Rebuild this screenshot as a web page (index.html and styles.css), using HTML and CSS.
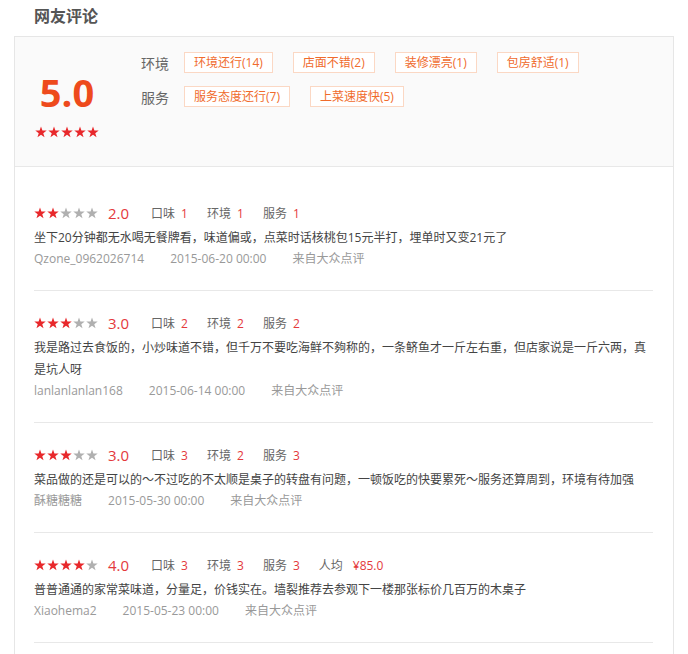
FILE: index.html
```html
<!DOCTYPE html>
<html lang="zh-CN">
<head>
  <meta charset="UTF-8">
  <title>网友评论</title>
  <link rel="stylesheet" href="styles.css">
</head>
<body>

  <svg width="0" height="0" class="defs">
    <symbol id="star" viewBox="0 0 12 12">
      <polygon points="6,0.4 7.41,4.46 11.71,4.55 8.28,7.14 9.53,11.25 6,8.8 2.47,11.25 3.72,7.14 0.29,4.55 4.59,4.46"/>
    </symbol>
  </svg>

  <div class="wrap">
    <h2 class="title">网友评论</h2>

    <div class="comment-box">
      <div class="summary">
        <div class="score">
          <div class="score-num">5.0</div>
          <div class="stars">
            <svg class="star on"><use href="#star"/></svg><svg class="star on"><use href="#star"/></svg><svg class="star on"><use href="#star"/></svg><svg class="star on"><use href="#star"/></svg><svg class="star on"><use href="#star"/></svg>
          </div>
        </div>
        <div class="tags">
          <div class="tag-row">
            <span class="tag-label">环境</span>
            <span class="tag">环境还行(14)</span>
            <span class="tag">店面不错(2)</span>
            <span class="tag">装修漂亮(1)</span>
            <span class="tag">包房舒适(1)</span>
          </div>
          <div class="tag-row">
            <span class="tag-label">服务</span>
            <span class="tag">服务态度还行(7)</span>
            <span class="tag">上菜速度快(5)</span>
          </div>
        </div>
      </div>

      <ul class="review-list" id="reviews"></ul>
    </div>
  </div>

  <script>
    const reviews = [
      {
        rate: 2,
        marks: [["口味", "1"], ["环境", "1"], ["服务", "1"]],
        text: "坐下20分钟都无水喝无餐牌看，味道偏或，点菜时话核桃包15元半打，埋单时又变21元了",
        user: "Qzone_0962026714",
        time: "2015-06-20 00:00"
      },
      {
        rate: 3,
        marks: [["口味", "2"], ["环境", "2"], ["服务", "2"]],
        text: "我是路过去食饭的，小炒味道不错，但千万不要吃海鲜不夠称的，一条鲚鱼才一斤左右重，但店家说是一斤六两，真是坑人呀",
        user: "lanlanlanlan168",
        time: "2015-06-14 00:00"
      },
      {
        rate: 3,
        marks: [["口味", "3"], ["环境", "2"], ["服务", "3"]],
        text: "菜品做的还是可以的～不过吃的不太顺是桌子的转盘有问题，一顿饭吃的快要累死～服务还算周到，环境有待加强",
        user: "酥糖糖糖",
        time: "2015-05-30 00:00"
      },
      {
        rate: 4,
        marks: [["口味", "3"], ["环境", "3"], ["服务", "3"]],
        price: "¥85.0",
        text: "普普通通的家常菜味道，分量足，价钱实在。墙裂推荐去参观下一楼那张标价几百万的木桌子",
        user: "Xiaohema2",
        time: "2015-05-23 00:00"
      }
    ];

    function starsHtml(n) {
      let html = "";
      for (let i = 0; i < 5; i++) {
        html += '<svg class="star ' + (i < n ? 'on' : 'off') + '"><use href="#star"/></svg>';
      }
      return html;
    }

    const list = document.getElementById("reviews");
    reviews.forEach(r => {
      let marks = r.marks.map(m =>
        '<span class="mark">' + m[0] + '<em>' + m[1] + '</em></span>'
      ).join("");
      if (r.price) {
        marks += '<span class="mark">人均<em class="price">' + r.price + '</em></span>';
      }
      const li = document.createElement("li");
      li.className = "review";
      li.innerHTML =
        '<div class="rate-line">' +
          '<span class="stars">' + starsHtml(r.rate) + '</span>' +
          '<span class="rate-num">' + r.rate + '.0</span>' +
          marks +
        '</div>' +
        '<p class="review-text">' + r.text + '</p>' +
        '<div class="meta">' +
          '<span>' + r.user + '</span>' +
          '<span>' + r.time + '</span>' +
          '<span>来自大众点评</span>' +
        '</div>';
      list.appendChild(li);
    });
  </script>

</body>
</html>
```

FILE: styles.css
```css
body {
  margin: 0;
  font-family: "Open Sans", "Noto Sans CJK SC", sans-serif;
  background-color: #fff;
  color: #444;
}

.defs {
  position: absolute;
}

.wrap {
  padding: 0 14px;
}

.title {
  margin: 0;
  height: 36px;
  line-height: 33px;
  padding-left: 20px;
  font-size: 16px;
  font-weight: bold;
  color: #555;
}

.comment-box {
  border: 1px solid #e6e6e6;
}

/* summary */
.summary {
  display: flex;
  height: 129px;
  background-color: #fafafa;
  border-bottom: 1px solid #e8e8e8;
}

.score {
  width: 104px;
  text-align: center;
  padding-top: 35px;
}

.score-num {
  font-size: 38px;
  font-weight: bold;
  line-height: 40px;
  color: #ee4a1c;
}

.score .stars {
  margin-top: 14px;
  justify-content: center;
}

.stars {
  display: inline-flex;
  gap: 1px;
}

.star {
  width: 12px;
  height: 12px;
}

.star.on {
  fill: #e8282b;
}

.star.off {
  fill: #b0b0b0;
}

.tags {
  margin-left: 22px;
  padding-top: 15px;
}

.tag-row {
  display: flex;
  align-items: center;
  height: 21px;
  margin-bottom: 13px;
}

.tag-label {
  font-size: 14px;
  color: #666;
  width: 28px;
  margin-right: 15px;
}

.tag {
  height: 19px;
  line-height: 19px;
  padding: 0 9px;
  margin-right: 20px;
  font-size: 12px;
  color: #f06b2c;
  background-color: #fff;
  border: 1px solid #fbd8c4;
}

/* reviews */
.review-list {
  list-style: none;
  margin: 0;
  padding: 14px 20px 20px 19px;
}

.review {
  padding: 20px 0 21px;
  border-bottom: 1px solid #e8e8e8;
}

.rate-line {
  display: flex;
  align-items: center;
  height: 24px;
  font-size: 12px;
  color: #666;
}

.rate-num {
  font-size: 15px;
  color: #e4393c;
  margin-left: 10px;
  margin-right: 22px;
}

.mark {
  margin-right: 19px;
}

.mark em {
  font-style: normal;
  color: #e4393c;
  margin-left: 6px;
}

.mark em.price {
  margin-left: 10px;
}

.review-text {
  margin: 2px 0 0;
  font-size: 12px;
  line-height: 22px;
  color: #444;
}

.meta {
  display: flex;
  gap: 26px;
  font-size: 12px;
  line-height: 20px;
  color: #999;
}
```
